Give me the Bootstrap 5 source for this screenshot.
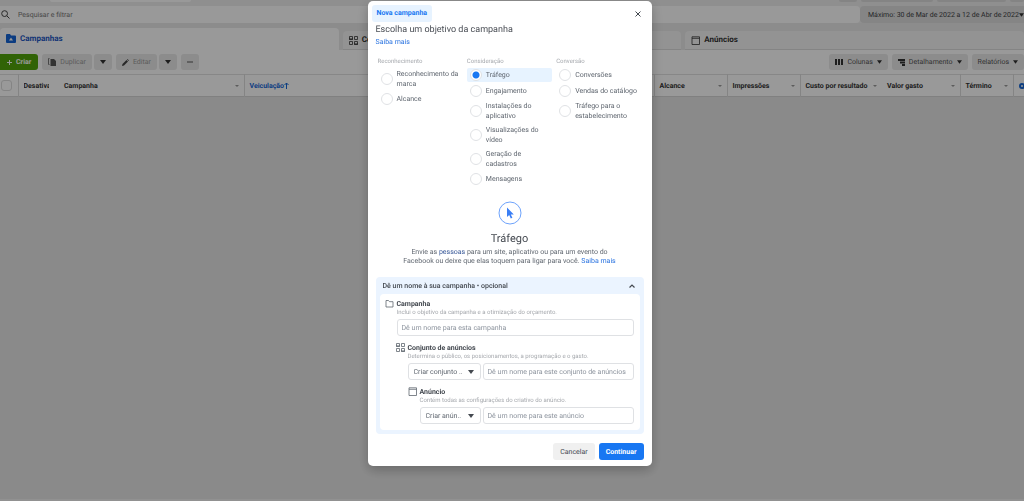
<!DOCTYPE html>
<html lang="pt-BR">
<head>
<meta charset="utf-8">
<meta name="viewport" content="width=device-width, initial-scale=1">
<title>Gerenciador de Anúncios</title>
<link href="https://cdn.jsdelivr.net/npm/bootstrap@5.3.0/dist/css/bootstrap.min.css" rel="stylesheet">
<style>
:root{--blue:#1877f2;--tint:#e7f3ff;--ink:#3c4043;--soft:#606770}
body{font-family:Roboto,"Liberation Sans",sans-serif;font-size:7px;line-height:10px;text-rendering:geometricPrecision;background:#e7e7e7;color:var(--ink);min-height:100vh;overflow:hidden;border-bottom:2px solid #f2f2f2}
button,input,select{font:inherit;color:inherit;text-rendering:inherit}
svg{display:block;flex:none}
a{color:#2a73e0;text-decoration:none}
/* top strip */
.strip{height:6px;background:#efefef}
.stub{height:2px;background:#dcdcdc;border-radius:0 0 3px 3px}
.stub-a{width:141px;margin-left:50px;background:#fff}
.stub-b{width:18px}.stub-c{width:72px}.stub-d{width:69px}.stub-e{width:14px}
.search-row{height:17px;background:#efefef}
.search-box{background:#fff;border-radius:0 4px 4px 0;padding-left:1px}
.search-box input{border:0;background:none;outline:0;min-width:0;padding:0}
.search-box input::placeholder{color:#777;opacity:1}
.date-btn{width:164px;border:0;background:#dedede;border-radius:4px 0 0 4px;white-space:nowrap;padding:0 1px 0 8px}
/* tabs */
.tabs{background:#e9e9e9;padding-top:5px;gap:4px;height:27px}
.tabs a{flex:1 1 0;min-width:0;background:#f5f5f5;color:#333;font-size:8px;font-weight:700;border-radius:4px 4px 0 0;margin-top:3px;padding:0 6px;gap:4px;border-bottom:1px solid #ddd}
.tabs a.active{background:#fff;color:#1c57c4;margin-top:0;border-color:#fff}
/* toolbar */
.tools{background:#fff;height:24px;padding-top:4px}
.tool{height:16px;border:0;background:#eaeaea;border-radius:3px;color:#555;white-space:nowrap;padding:0 6px;gap:4px}
.tool:disabled{color:#999}
.tool.create{background:#52a50a;color:#fff;font-weight:700;border-radius:0 3px 3px 0;padding:0 7px}
.pair{gap:2px}
/* table */
.grid-head{table-layout:fixed;width:100%;background:#fff;margin:0;border-top:1px solid #e2e2e2;border-bottom:1px solid #d5d5d5}
.grid-head th{height:22px;padding:0 5px;font-size:7px;white-space:nowrap;overflow:hidden;border-left:1px solid #dcdcdc;color:#333}
.grid-head th.flat{border-left:0}
.grid-head th:first-child{padding:0 1px}
.grid-head th.cut{padding-right:10px}
.grid-head th.sorted{color:#1768d8}
.grid-head input{appearance:none;display:block;width:11px;height:11px;border:1px solid #ddd;border-radius:3px;margin:0}
/* dialog */
.modal-backdrop.show{opacity:.4}
.modal{padding-right:5px}
.modal-dialog{max-width:284px;margin:1px auto}
.modal-content{border:0;border-radius:5px;padding:4px 8px 6px;color:var(--soft);box-shadow:0 4px 12px rgba(0,0,0,.25)}
.pill{background:var(--tint);color:var(--blue);font-weight:700;border-radius:3px;padding:4px 5px;line-height:9px;margin-left:-4px}
.x-btn{border:0;background:none;padding:0;margin-right:3px}
h1{font-size:9px;line-height:12px;font-weight:400;color:#4b4f56;margin:2px 0 1px}
.more{line-height:10px}
.goals{gap:4px;margin:10px 0 0;padding:0 2px}
.goals fieldset{flex:1 1 0;min-width:0}
.goals legend{font-size:6px;line-height:10px;margin:0 0 1px;color:#a5a8ad;float:none}
.goal{min-height:14px;padding:1px 0 1px 3px;gap:4px;margin-bottom:2px;border-radius:2px}
.goal:has(input:checked){background:var(--tint)}
.goal input{appearance:none;width:12px;height:12px;border:1px solid #dfe1e4;border-radius:50%;margin:0;flex:none;background:#fff}
.goal input:checked{background:radial-gradient(circle,var(--blue) 0 3px,#fff 4px)}
.preview{margin-top:13px}
.preview h2{font-size:11px;line-height:14px;font-weight:400;color:#444950;margin:7px 0 2px}
.preview p{line-height:9px;margin:0 auto}
.naming{background:#ebf4ff;border-radius:4px;margin-top:11px;padding:0 4px 4px}
.naming-head{border:0;background:none;height:17px;padding:0 5px 0 3px;font-weight:500;color:#444950}
.naming-body{background:#fff;border-radius:4px;padding:5px 6px 6px 5px;gap:7px}
.level-2{padding-left:11px}.level-3{padding-left:23px}
.level{gap:3px}
.level label{font-weight:700;line-height:10px;color:#444950;display:block}
.hint{font-size:6px;line-height:8px;color:#a5a8ad;margin-bottom:2px}
.fld{height:17px;border:1px solid #dfe1e4;border-radius:3px;padding:0 4px;background-color:#fff;min-width:0;outline:0}
.fld::placeholder{color:#8d949e;opacity:1}
select.fld{appearance:none;flex:none;padding-left:5px;background:url("data:image/svg+xml,%3Csvg xmlns='http://www.w3.org/2000/svg' viewBox='0 0 6 4'%3E%3Cpath d='M0 0h6L3 4z' fill='%23444950'/%3E%3C/svg%3E") no-repeat right 6px center/6px 4px}
.pick-set{width:73px}.pick-ad{width:61px}
.foot{margin-top:9px;gap:4px}
.foot button{height:17px;border:0;border-radius:3px;padding:0 7px;background:#f0f0f0;color:#444950}
.foot .go{background:var(--blue);color:#fff;font-weight:700}
</style>
</head>
<body>
<svg width="0" height="0" class="position-absolute" aria-hidden="true">
  <symbol id="caret" viewBox="0 0 6 4"><path d="M0 0h6L3 4z" fill="#333"/></symbol>
  <symbol id="sort" viewBox="0 0 4 2"><path d="M0 0h4L2 2z" fill="#999"/></symbol>
  <symbol id="blocks" viewBox="0 0 9 9"><g fill="none" stroke="currentColor" stroke-width=".8"><path d="M.5.5h3v3h-3zM5.500.5h3v3h-3zM.5 5.500h3v3h-3zM5.500 5.500h3v3h-3z"/></g><path d="M0 2h4v2H0zM5 7h4v2H5z" fill="currentColor" opacity=".5"/></symbol>
  <symbol id="frame" viewBox="0 0 9 9"><path d="M1 .8h7.500v7.700H1zM1 2.300h7.500" fill="none" stroke="currentColor" stroke-width=".8"/></symbol>
</svg>

<header>
  <div class="strip d-flex align-items-start">
    <div class="stub stub-a"></div>
    <div class="d-flex gap-1 ms-auto"><div class="stub stub-b"></div><div class="stub stub-c"></div><div class="stub stub-d"></div><div class="stub stub-e"></div></div>
  </div>
  <div class="search-row d-flex">
    <label class="search-box d-flex align-items-center flex-grow-1 gap-2">
      <svg width="9" height="9" viewBox="0 0 9 9" fill="none" stroke="#444" stroke-width="1"><circle cx="3.600" cy="3.600" r="2.900"/><path d="M5.800 5.800 8.500 8.500"/></svg>
      <input class="flex-grow-1" type="search" placeholder="Pesquisar e filtrar" aria-label="Pesquisar e filtrar">
    </label>
    <button class="date-btn d-flex align-items-center justify-content-between" type="button">Máximo: 30 de Mar de 2022 a 12 de Abr de 2022 <svg width="5" height="4"><use href="#caret"/></svg></button>
  </div>
  <nav class="tabs d-flex">
    <a href="#" class="active d-flex align-items-center"><svg width="10" height="9" viewBox="0 0 10 9"><path d="M0 1Q0 0 1 0h3l1 1.500h4q1 0 1 1V8q0 1-1 1H1Q0 9 0 8z" fill="#1464d8"/><path d="m5 3.500 2 3H3z" fill="#fff"/></svg>Campanhas</a>
    <a href="#" class="d-flex align-items-center"><svg width="9" height="9"><use href="#blocks"/></svg>Conjuntos de anúncios</a>
    <a href="#" class="d-flex align-items-center"><svg width="9" height="9"><use href="#frame"/></svg>Anúncios</a>
  </nav>
</header>

<main>
  <div class="tools d-flex gap-1">
    <button class="tool create d-flex align-items-center" type="button"><svg width="5" height="5" viewBox="0 0 5 5"><path d="M2.500 0v5M0 2.500h5" stroke="#fff"/></svg>Criar</button>
    <div class="pair d-flex">
      <button class="tool d-flex align-items-center" type="button" disabled><svg width="8" height="8" viewBox="0 0 8 8"><path d="M1.500.5H.5v6h1" fill="none" stroke="#777"/><path d="M2.500 1H6l2 2v5H2.500z" fill="#555"/></svg>Duplicar</button>
      <button class="tool d-flex align-items-center" type="button" aria-label="Opções de duplicar"><svg width="6" height="4"><use href="#caret"/></svg></button>
    </div>
    <div class="pair d-flex">
      <button class="tool d-flex align-items-center" type="button" disabled><svg width="7" height="7" viewBox="0 0 7 7"><path d="m0 7 .5-2L4.500 1l1.500 1.500-4 4zM5 .5l.5-.5L7 1.500l-.5.5z" fill="#444"/></svg>Editar</button>
      <button class="tool d-flex align-items-center" type="button" aria-label="Opções de editar"><svg width="6" height="4"><use href="#caret"/></svg></button>
    </div>
    <button class="tool d-flex align-items-center" type="button" aria-label="Mais"><svg width="6" height="2" viewBox="0 0 6 2" fill="#444"><circle cx="1" cy="1" r=".8"/><circle cx="3" cy="1" r=".8"/><circle cx="5" cy="1" r=".8"/></svg></button>
    <div class="d-flex gap-1 ms-auto">
      <button class="tool d-flex align-items-center" type="button"><svg width="8" height="6" viewBox="0 0 8 6"><path d="M0 0h2v6H0zM3 0h2v6H3zM6 0h2v6H6z" fill="#333"/></svg>Colunas <svg width="5" height="4"><use href="#caret"/></svg></button>
      <button class="tool d-flex align-items-center" type="button"><svg width="7" height="7" viewBox="0 0 7 7"><path d="M0 0h7v2H0zM2 2.500h5v2H2zM4 5h3v2H4z" fill="#333"/></svg>Detalhamento <svg width="5" height="4"><use href="#caret"/></svg></button>
      <button class="tool d-flex align-items-center" type="button">Relatórios <svg width="5" height="4"><use href="#caret"/></svg></button>
    </div>
  </div>
  <table class="grid-head align-middle">
    <colgroup><col style="width:18px"><col style="width:41px"><col style="width:185px"><col><col style="width:73px"><col style="width:73px"><col style="width:82px"><col style="width:78px"><col style="width:53px"><col style="width:11px"></colgroup>
    <thead><tr>
      <th class="flat"><input type="checkbox" aria-label="Selecionar tudo"></th>
      <th class="cut"><div class="overflow-hidden">Desativar</div></th>
      <th class="flat"><div class="d-flex align-items-center justify-content-between">Campanha<svg width="4" height="2"><use href="#sort"/></svg></div></th>
      <th class="sorted"><div class="d-flex align-items-center">Veiculação<svg width="5" height="7" viewBox="0 0 5 7"><path d="M2.500 7V1M.5 3l2-2 2 2" fill="none" stroke="currentColor"/></svg></div></th>
      <th><div class="d-flex align-items-center justify-content-between">Alcance<svg width="4" height="2"><use href="#sort"/></svg></div></th>
      <th><div class="d-flex align-items-center justify-content-between">Impressões<svg width="4" height="2"><use href="#sort"/></svg></div></th>
      <th><div class="d-flex align-items-center justify-content-between">Custo por resultado<svg width="4" height="2"><use href="#sort"/></svg></div></th>
      <th class="flat"><div class="d-flex align-items-center justify-content-between">Valor gasto<svg width="4" height="2"><use href="#sort"/></svg></div></th>
      <th><div class="d-flex align-items-center justify-content-between">Término<svg width="4" height="2"><use href="#sort"/></svg></div></th>
      <th class="pe-0"><svg width="6" height="6" viewBox="0 0 6 6"><circle cx="3" cy="3" r="2" fill="none" stroke="#1768d8" stroke-width="2"/></svg></th>
    </tr></thead>
  </table>
</main>

<div class="modal-backdrop show"></div>
<div class="modal show d-block" role="dialog" aria-modal="true" aria-labelledby="dlg-title">
  <div class="modal-dialog">
    <form class="modal-content" onsubmit="return false">
      <div class="d-flex align-items-center justify-content-between">
        <span class="pill">Nova campanha</span>
        <button class="x-btn" type="button" aria-label="Fechar"><svg width="6" height="6" viewBox="0 0 6 6"><path d="m.5.5 5 5m0-5-5 5" stroke="#444950"/></svg></button>
      </div>
      <h1 id="dlg-title">Escolha um objetivo da campanha</h1>
      <div class="more d-flex"><a href="#">Saiba mais</a></div>

      <div class="goals d-flex">
        <fieldset><legend>Reconhecimento</legend>
          <label class="goal d-flex align-items-center"><input type="radio" name="goal"><span>Reconhecimento da<br>marca</span></label>
          <label class="goal d-flex align-items-center"><input type="radio" name="goal"><span>Alcance</span></label>
        </fieldset>
        <fieldset><legend>Consideração</legend>
          <label class="goal d-flex align-items-center"><input type="radio" name="goal" checked><span>Tráfego</span></label>
          <label class="goal d-flex align-items-center"><input type="radio" name="goal"><span>Engajamento</span></label>
          <label class="goal d-flex align-items-center"><input type="radio" name="goal"><span>Instalações do<br>aplicativo</span></label>
          <label class="goal d-flex align-items-center"><input type="radio" name="goal"><span>Visualizações do<br>vídeo</span></label>
          <label class="goal d-flex align-items-center"><input type="radio" name="goal"><span>Geração de<br>cadastros</span></label>
          <label class="goal d-flex align-items-center"><input type="radio" name="goal"><span>Mensagens</span></label>
        </fieldset>
        <fieldset><legend>Conversão</legend>
          <label class="goal d-flex align-items-center"><input type="radio" name="goal"><span>Conversões</span></label>
          <label class="goal d-flex align-items-center"><input type="radio" name="goal"><span>Vendas do catálogo</span></label>
          <label class="goal d-flex align-items-center"><input type="radio" name="goal"><span>Tráfego para o<br>estabelecimento</span></label>
        </fieldset>
      </div>

      <section class="preview text-center">
        <svg class="mx-auto" width="24" height="24" viewBox="0 0 24 24"><circle cx="12" cy="12" r="11" fill="#fff" stroke="#6da2fb"/><path d="M9 6.500v9.500l2.200-2 1.600 3.500 1.600-.8-1.600-3.300h3z" fill="#3b7ff5"/></svg>
        <h2>Tráfego</h2>
        <p>Envie as <a href="#" style="color:#385898">pessoas</a> para um site, aplicativo ou para um evento do<br>Facebook ou deixe que elas toquem para ligar para você. <a href="#">Saiba mais</a></p>
      </section>

      <section class="naming">
        <button class="naming-head d-flex w-100 align-items-center justify-content-between" type="button">Dê um nome à sua campanha • opcional <svg width="6" height="4" viewBox="0 0 6 4"><path d="m.5 3.500 2.500-2.500 2.500 2.500" fill="none" stroke="#444950" stroke-width="1.200"/></svg></button>
        <div class="naming-body d-flex flex-column">
          <div class="level d-flex">
            <svg width="9" height="9" viewBox="0 0 9 9"><path d="M1 1.500h2.500l1 1.200H8v5.300H1z" fill="none" stroke="#606770" stroke-linejoin="round" stroke-width=".8"/></svg>
            <div class="flex-grow-1">
              <label for="n1">Campanha</label>
              <div class="hint">Inclui o objetivo da campanha e a otimização do orçamento.</div>
              <input class="fld d-block w-100" id="n1" placeholder="Dê um nome para esta campanha">
            </div>
          </div>
          <div class="level level-2 d-flex">
            <svg width="9" height="9"><use href="#blocks"/></svg>
            <div class="flex-grow-1">
              <label for="n2">Conjunto de anúncios</label>
              <div class="hint">Determina o público, os posicionamentos, a programação e o gasto.</div>
              <div class="pair d-flex"><select class="fld pick-set" aria-label="Conjunto"><option>Criar conjunto ..</option></select><input class="fld flex-grow-1" id="n2" placeholder="Dê um nome para este conjunto de anúncios"></div>
            </div>
          </div>
          <div class="level level-3 d-flex">
            <svg width="9" height="9"><use href="#frame"/></svg>
            <div class="flex-grow-1">
              <label for="n3">Anúncio</label>
              <div class="hint">Contém todas as configurações do criativo do anúncio.</div>
              <div class="pair d-flex"><select class="fld pick-ad" aria-label="Anúncio"><option>Criar anún..</option></select><input class="fld flex-grow-1" id="n3" placeholder="Dê um nome para este anúncio"></div>
            </div>
          </div>
        </div>
      </section>

      <div class="foot d-flex justify-content-end">
        <button type="button">Cancelar</button>
        <button type="submit" class="go">Continuar</button>
      </div>
    </form>
  </div>
</div>
<script src="https://cdn.jsdelivr.net/npm/bootstrap@5.3.0/dist/js/bootstrap.bundle.min.js"></script>
</body>
</html>
